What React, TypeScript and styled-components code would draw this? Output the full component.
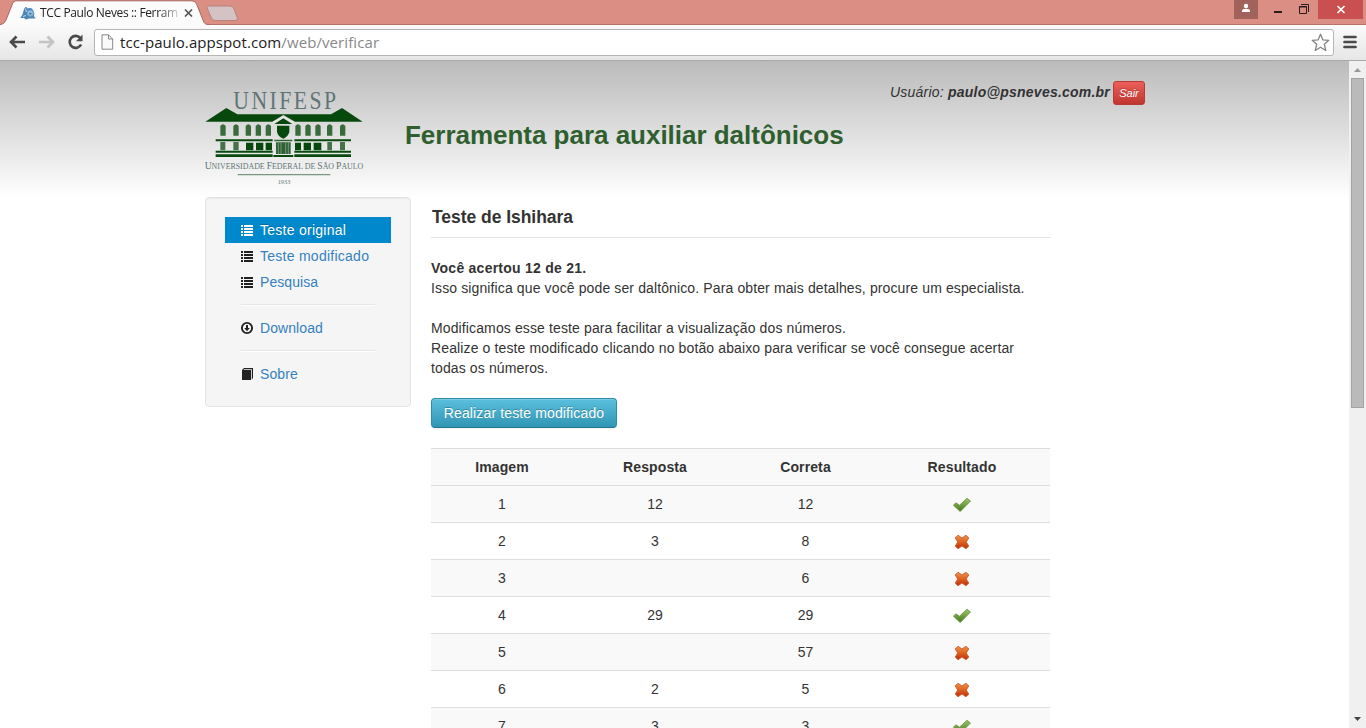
import React from "react";
import styled, { createGlobalStyle } from "styled-components";

const GlobalStyle = createGlobalStyle`
  * { box-sizing: border-box; }
  body {
    margin: 0;
    overflow: hidden;
    background: #fff;
    color: #333;
    font: 14px/20px "Liberation Sans", Arial, sans-serif;
  }
  svg { display: block; flex: none; }
`;

const Window = styled.div`
  width: 1366px;
  height: 728px;
  display: flex;
  flex-direction: column;
  overflow: hidden;
`;

const TabStrip = styled.div`
  height: 25px;
  flex: none;
  display: flex;
  justify-content: space-between;
  background: #db8e84;
  box-shadow: inset 0 -1px #b3736b;
`;

const TabArea = styled.div`
  position: relative;
  width: 240px;
  height: 25px;
`;

const TabContent = styled.div`
  position: absolute;
  inset: 0;
  display: flex;
  align-items: center;
  padding-left: 20px;
`;

const TabTitle = styled.span`
  width: 139px;
  margin: 1px 5px 0 4px;
  white-space: nowrap;
  font: 12px/18px "Open Sans", sans-serif;
  letter-spacing: -0.36px;
  color: #222;
  mask-image: linear-gradient(90deg, #000 118px, rgba(0, 0, 0, 0.2) 138px);
`;

const Toolbar = styled.div`
  height: 36px;
  flex: none;
  display: flex;
  align-items: center;
  padding: 0 8px 1px 8px;
  background: linear-gradient(#fbfbfb, #e6e6e6);
  border-bottom: 1px solid #a9a9a9;
`;

const NavButtons = styled.div`
  display: flex;
  align-items: center;
  gap: 9px;
`;

const Address = styled.div`
  height: 27px;
  width: 1240px;
  margin: 0 9px 0 10px;
  padding: 0 3px 0 6px;
  display: flex;
  align-items: center;
  background: #fff;
  border: 1px solid #b5b5b5;
  border-radius: 3px;
`;

const Url = styled.span`
  flex: 1;
  padding-left: 6px;
  font: 15px/24px "Open Sans", sans-serif;
  letter-spacing: 0.09px;
  color: #222;
  span { color: #888; }
`;

const WindowControls = styled.div`
  display: flex;
  align-items: flex-start;
`;

const Control = styled.div<{ $width: number; $bg?: string }>`
  width: ${(p) => p.$width}px;
  height: 19px;
  background: ${(p) => p.$bg ?? "transparent"};
`;

const Viewport = styled.div`
  flex: 1;
  min-height: 0;
  display: flex;
`;

const Page = styled.div`
  width: 1349px;
  overflow: hidden;
  background: linear-gradient(#bbb, #fff 136px);
`;

const Container = styled.div`
  width: 940px;
  margin-left: 205px;
`;

const Header = styled.header`
  height: 136px;
  display: flex;
`;

const LogoBox = styled.div`
  width: 200px;
  padding-top: 19px;
  svg { margin-left: -10px; }
`;

const SiteTitle = styled.h1`
  margin: 54px 0 0;
  width: 485px;
  font-size: 26px;
  line-height: 40px;
  letter-spacing: -0.02px;
  color: #2f5f2f;
  white-space: nowrap;
`;

const UserBar = styled.div`
  flex: 1;
  height: 24px;
  margin-top: 20px;
  display: flex;
  align-items: center;
  justify-content: flex-end;
  gap: 3px;
  white-space: nowrap;
  font-style: italic;
  letter-spacing: 0.22px;
`;

const UserName = styled.span`
  margin-top: -2px;
`;

const LogoutButton = styled.button`
  width: 32px;
  height: 24px;
  padding: 0;
  border: 1px solid #b93a35;
  border-radius: 3px;
  background: linear-gradient(#ec5f5b, #bf3630);
  color: #fff;
  font: italic 11px/20px "Liberation Sans", Arial, sans-serif;
  text-shadow: 0 -1px rgba(0, 0, 0, 0.25);
`;

const Columns = styled.div`
  display: flex;
  align-items: flex-start;
  gap: 20px;
`;

const Sidebar = styled.nav`
  width: 206px;
  padding: 19px;
  border: 1px solid #e3e3e3;
  border-radius: 4px;
  background: #f5f5f5;
  box-shadow: inset 0 1px 1px rgba(0, 0, 0, 0.05);
`;

const NavItem = styled.a<{ $active?: boolean; $tight?: boolean }>`
  height: 26px;
  padding: 0 15px;
  display: flex;
  align-items: center;
  gap: 6px;
  letter-spacing: ${(p) => (p.$tight ? "0.08px" : "0.26px")};
  white-space: nowrap;
  color: ${(p) => (p.$active ? "#fff" : "#337fbf")};
  background: ${(p) => (p.$active ? "#0088cc" : "transparent")};
  text-shadow: ${(p) => (p.$active ? "0 -1px rgba(0,0,0,.2)" : "0 1px rgba(255,255,255,.5)")};
  svg { color: ${(p) => (p.$active ? "#fff" : "#222")}; }
`;

const Divider = styled.div`
  height: 2px;
  margin: 9px 16px;
  background: #e5e5e5;
  border-bottom: 1px solid #fff;
`;

const Content = styled.main`
  width: 620px;
`;

const SectionTitle = styled.h2`
  margin: 0 0 20px;
  padding: 0 1px;
  height: 41px;
  font-size: 17.5px;
  line-height: 40px;
  letter-spacing: -0.04px;
  border-bottom: 1px solid #e5e5e5;
`;

const Paragraph = styled.p`
  margin: 0 0 20px;
  letter-spacing: 0.122px;
  strong { letter-spacing: 0.25px; }
`;

const ActionButton = styled.button`
  display: block;
  width: 186px;
  height: 30px;
  padding: 0;
  margin-bottom: 20px;
  border: 1px solid #2f8ba6;
  border-bottom-color: #24748c;
  border-radius: 4px;
  background: linear-gradient(#5bc0de, #2f96b4);
  box-shadow: inset 0 1px rgba(255, 255, 255, 0.2), 0 1px 2px rgba(0, 0, 0, 0.05);
  color: #fff;
  font: 14px/20px "Liberation Sans", Arial, sans-serif;
  letter-spacing: 0.13px;
  text-shadow: 0 -1px rgba(0, 0, 0, 0.25);
`;

const Table = styled.div`
  width: 619px;
`;

const Row = styled.div<{ $striped: boolean; $head?: boolean }>`
  height: 37px;
  display: grid;
  grid-template-columns: 142px 164px 137px 176px;
  align-items: center;
  justify-items: center;
  border-top: 1px solid #ddd;
  background: ${(p) => (p.$striped ? "#f9f9f9" : "#fff")};
  font-weight: ${(p) => (p.$head ? "bold" : "normal")};
  letter-spacing: ${(p) => (p.$head ? "0.12px" : "0")};
  svg { margin-top: 1px; }
`;

const ScrollBar = styled.div`
  width: 17px;
  display: flex;
  flex-direction: column;
  align-items: center;
  background: #f0f0f0;
`;

const ScrollThumb = styled.div`
  width: 13px;
  height: 330px;
  background: #bababa;
  border: 1px solid #a3a3a3;
`;

const ScrollRest = styled.div`
  flex: 1;
`;

const Favicon = () => (
  <svg width="16" height="16" viewBox="0 0 16 16">
    <path d="M.3 13 2.500 9.500 4 4Q6 .5 7.500 3.500Q12 1.800 13.500 6Q15 9 13.800 11L15.700 13.500H9L6 14.500 4 13Z" fill="#4a86b5" />
    <path d="M5.500 3.500 6.500 7M3 11.500 6 10.500" stroke="#c4e0f1" strokeWidth="1" fill="none" />
    <circle cx="10.300" cy="8.200" r="3" fill="#9cc6e3" stroke="#6fa5cb" />
    <circle cx="10.300" cy="8.600" r="1.200" fill="#3d77a5" />
  </svg>
);

const TabShape = () => (
  <svg width="240" height="25" viewBox="0 0 240 25">
    <path d="M0 25C4 24 5 22 6 20L12 5C13 2 14 .8 17 .8H191C194 .8 196 2 197 5L203 20C204 23 205 24.500 209 25Z" fill="#fbfbfb" />
    <path d="M0 24.500C4 24 5 22 6 20L12 5C13 2 14 .8 17 .8H191C194 .8 196 2 197 5L203 20C204 23 205 24.500 209 24.500" fill="none" stroke="#a4665e" />
    <path d="M209 6H229C232 6 233 7 234 9L237 17C238 19.500 237 20.500 235 20.500H216C213 20.500 212 19.500 211 17L207.500 9C206.500 7 207 6 209 6Z" fill="#d3c3c5" stroke="#b9817b" />
  </svg>
);

const CloseTab = () => (
  <svg width="9" height="9" viewBox="0 0 9 9">
    <path d="M1 1.500 8 8.500M8 1.500 1 8.500" stroke="#555" strokeWidth="1.700" />
  </svg>
);

const NavArrow = ({ back }: { back?: boolean }) => (
  <svg width="20" height="16" viewBox="0 0 20 16">
    <g transform={back ? undefined : "translate(19 0) scale(-1 1)"} stroke={back ? "#4a4a4a" : "#c3c3c3"} fill="none" strokeWidth="2.700">
      <path d="M3 8H17M8.500 2.500 3 8 8.500 13.500" />
    </g>
  </svg>
);

const Reload = () => (
  <svg width="18" height="18" viewBox="-0.5 0 18 18">
    <path d="M13.800 5A6 6 0 1 0 14.600 11.500" fill="none" stroke="#4a4a4a" strokeWidth="2.600" />
    <path d="M16 1.500V8.200H9.500Z" fill="#4a4a4a" />
  </svg>
);

const PageIcon = () => (
  <svg width="13" height="16" viewBox="0 0 13 16">
    <path d="M1 .8H7.500L11.700 5V15.200H1Z" fill="#fafafa" stroke="#888" />
    <path d="M7.500 .8V5H11.700" fill="none" stroke="#888" />
  </svg>
);

const Star = () => (
  <svg width="19" height="19" viewBox="0 0 19 19">
    <path d="M9.500 1.200 11.800 6.800 17.800 7.300 13.300 11.300 14.800 17.500 9.500 14.300 4.200 17.500 5.700 11.300 1.200 7.300 7.200 6.800Z" fill="#fff" stroke="#848484" strokeWidth="1.300" strokeLinejoin="round" />
  </svg>
);

const MenuIcon = () => (
  <svg width="14" height="14" viewBox="0 0 14 14">
    <path d="M1.500 2H12.500M1.500 7H12.500M1.500 12H12.500" stroke="#4a4a4a" strokeWidth="2.700" strokeLinecap="round" />
  </svg>
);

const ListIcon = () => (
  <svg width="14" height="14" viewBox="0 0 14 14" shapeRendering="crispEdges">
    <path d="M1 2H3M4 2H13M1 5H3M4 5H13M1 8H3M4 8H13M1 11H3M4 11H13" transform="translate(0 1)" stroke="currentColor" strokeWidth="2" />
  </svg>
);

const DownloadIcon = () => (
  <svg width="14" height="14" viewBox="0 0 14 14">
    <circle cx="7" cy="7" r="5.100" fill="none" stroke="currentColor" strokeWidth="1.900" />
    <path d="M6 4H8V7H9.800L7 10.200 4.200 7H6Z" fill="currentColor" />
  </svg>
);

const BookIcon = () => (
  <svg width="14" height="14" viewBox="0 0 14 14">
    <path d="M2 3 4 1H13V11L11.800 12.500V2.300H4.200L3.500 3H11V13H2Z" fill="currentColor" />
  </svg>
);

const CheckIcon = () => (
  <svg width="18" height="16" viewBox="0 0 18 16">
    <defs>
      <linearGradient id="check" x2="0" y2="1">
        <stop stopColor="#a1c36e" />
        <stop offset="1" stopColor="#3f7a18" />
      </linearGradient>
    </defs>
    <path d="M.4 8.200 3 5.800 6.500 8.200 14 1.300 17.500 4 7.200 14.500Z" fill="url(#check)" stroke="#71983f" strokeWidth=".9" strokeLinejoin="round" />
  </svg>
);

const CrossIcon = () => (
  <svg width="16" height="16" viewBox="0 0 16 16">
    <defs>
      <linearGradient id="cross" x2="0" y2="1">
        <stop stopColor="#ed9150" />
        <stop offset=".5" stopColor="#df621d" />
        <stop offset="1" stopColor="#b92d10" />
      </linearGradient>
    </defs>
    <path d="M4 1.200 8 4 12 1.200 14.800 4 12.200 8 14.800 12 12 14.800 8 12 4 14.800 1.200 12 3.800 8 1.200 4Z" fill="url(#cross)" stroke="#cf5a27" strokeWidth=".9" strokeLinejoin="round" />
  </svg>
);

const windowsX = [76, 115, 152, 182, 212, 301, 331, 361, 396, 435];

const UniversityLogo = () => (
  <svg width="180" height="115" viewBox="0 0 540 345">
    <g fontFamily="'Liberation Serif', serif" fill="#5f7575">
      <text x="115" y="86" fontSize="78" letterSpacing="9" textLength="316" lengthAdjust="spacingAndGlyphs">UNIFESP</text>
      <text x="29" y="267" fontSize="28" textLength="476" lengthAdjust="spacingAndGlyphs">
        U<tspan fontSize="23">NIVERSIDADE </tspan>F<tspan fontSize="23">EDERAL DE </tspan>S<tspan fontSize="23">ÃO </tspan>P<tspan fontSize="23">AULO</tspan>
      </text>
      <text x="248" y="313" fontSize="20" textLength="38" lengthAdjust="spacingAndGlyphs">1933</text>
    </g>
    <g fill="#07490d">
      <path d="M31 125 94 84 127 103H235L265 103H408L441 84 503 125H300L265 105 232 125Z" />
      <path d="M233 127 265 108 297 127V134L265 116 233 134Z" fill="#e6e9e6" />
      <path d="M238 132 265 115 292 132Z" />
      <path d="M246 137H283V156Q279 170 265 176Q249 170 246 156Z" />
      {windowsX.map((x) => (
        <path key={x} d={`M${x} 167V138Q${x + 8} 128 ${x + 16} 138V167Z`} fill="#386a3c" />
      ))}
      <path d="M62 178H233V184H62ZM298 178H468V184H298ZM62 212H233V218H62ZM298 212H468V218H298ZM62 223H233V231H62ZM298 223H468V231H298Z" />
      <path d="M153 188H175V211H153ZM183 188H205V211H183ZM212 188H231V211H212ZM300 188H318V211H300ZM326 188H348V211H326ZM356 188H379V211H356Z" />
      <path d="M76 186H91V211H76ZM115 186H131V211H115ZM397 186H411V211H397ZM435 186H450V211H435Z" fill="#467249" />
      <path d="M238 179H292V184H238ZM243 187H287V222H243Z" fill="#2f6233" />
      <path d="M250 187V222M258 187V222M272 187V222M280 187V222" stroke="#9db29e" strokeWidth="2" />
      <path d="M235 225H295V231H235Z" />
    </g>
    <path d="M128 284H406" stroke="#789780" strokeWidth="4" />
  </svg>
);

const results = [
  { image: 1, answer: "12", correct: "12" },
  { image: 2, answer: "3", correct: "8" },
  { image: 3, answer: "", correct: "6" },
  { image: 4, answer: "29", correct: "29" },
  { image: 5, answer: "", correct: "57" },
  { image: 6, answer: "2", correct: "5" },
  { image: 7, answer: "3", correct: "3" },
];

export default function App() {
  return (
    <Window>
      <GlobalStyle />
      <TabStrip>
        <TabArea>
          <TabShape />
          <TabContent>
            <Favicon />
            <TabTitle>TCC Paulo Neves :: Ferram</TabTitle>
            <CloseTab />
          </TabContent>
        </TabArea>
        <WindowControls>
          <Control $width={24} $bg="#a0625b">
            <svg width="24" height="19" viewBox="0 0 24 19">
              <circle cx="12" cy="6" r="2.200" fill="#fff" />
              <path d="M8 12V11Q8 8.700 12 8.700T16 11V12Z" fill="#fff" />
            </svg>
          </Control>
          <Control $width={60}>
            <svg width="60" height="19" viewBox="0 0 60 19">
              <path d="M16 12H24" stroke="#2b1b1a" strokeWidth="2" />
              <path d="M41.500 6.500H48.500V13.500H41.500Z" fill="none" stroke="#2b1b1a" />
              <path d="M41 7H49M43 4.500H50.500V12" fill="none" stroke="#2b1b1a" />
            </svg>
          </Control>
          <Control $width={45} $bg="#c94f50">
            <svg width="45" height="19" viewBox="0 0 45 19">
              <path d="M19.500 6 26.500 13M26.500 6 19.500 13" stroke="#fff" strokeWidth="1.700" />
            </svg>
          </Control>
          <Control $width={3} />
        </WindowControls>
      </TabStrip>
      <Toolbar>
        <NavButtons>
          <NavArrow back />
          <NavArrow />
          <Reload />
        </NavButtons>
        <Address>
          <PageIcon />
          <Url>tcc-paulo.appspot.com<span>/web/verificar</span></Url>
          <Star />
        </Address>
        <MenuIcon />
      </Toolbar>
      <Viewport>
        <Page>
          <Container>
            <Header>
              <LogoBox><UniversityLogo /></LogoBox>
              <SiteTitle>Ferramenta para auxiliar daltônicos</SiteTitle>
              <UserBar>
                <UserName>Usuário: <strong>paulo@psneves.com.br</strong></UserName>
                <LogoutButton>Sair</LogoutButton>
              </UserBar>
            </Header>
            <Columns>
              <Sidebar>
                <NavItem $active><ListIcon />Teste original</NavItem>
                <NavItem><ListIcon />Teste modificado</NavItem>
                <NavItem $tight><ListIcon />Pesquisa</NavItem>
                <Divider />
                <NavItem $tight><DownloadIcon />Download</NavItem>
                <Divider />
                <NavItem $tight><BookIcon />Sobre</NavItem>
              </Sidebar>
              <Content>
                <SectionTitle>Teste de Ishihara</SectionTitle>
                <Paragraph>
                  <strong>Você acertou 12 de 21.</strong><br />
                  Isso significa que você pode ser daltônico. Para obter mais detalhes, procure um especialista.
                </Paragraph>
                <Paragraph>
                  Modificamos esse teste para facilitar a visualização dos números.<br />
                  Realize o teste modificado clicando no botão abaixo para verificar se você consegue acertar<br />
                  todas os números.
                </Paragraph>
                <ActionButton>Realizar teste modificado</ActionButton>
                <Table>
                  <Row $striped $head>
                    <span>Imagem</span><span>Resposta</span><span>Correta</span><span>Resultado</span>
                  </Row>
                  {results.map((r, i) => (
                    <Row key={r.image} $striped={i % 2 === 0}>
                      <span>{r.image}</span>
                      <span>{r.answer}</span>
                      <span>{r.correct}</span>
                      {r.answer === r.correct ? <CheckIcon /> : <CrossIcon />}
                    </Row>
                  ))}
                </Table>
              </Content>
            </Columns>
          </Container>
        </Page>
        <ScrollBar>
          <svg width="17" height="17" viewBox="0 0 17 17"><path d="M5 11 8.500 7 12 11Z" fill="#999" /></svg>
          <ScrollThumb />
          <ScrollRest />
          <svg width="17" height="17" viewBox="0 0 17 17"><path d="M5 6H12L8.500 10Z" fill="#444" /></svg>
        </ScrollBar>
      </Viewport>
    </Window>
  );
}
